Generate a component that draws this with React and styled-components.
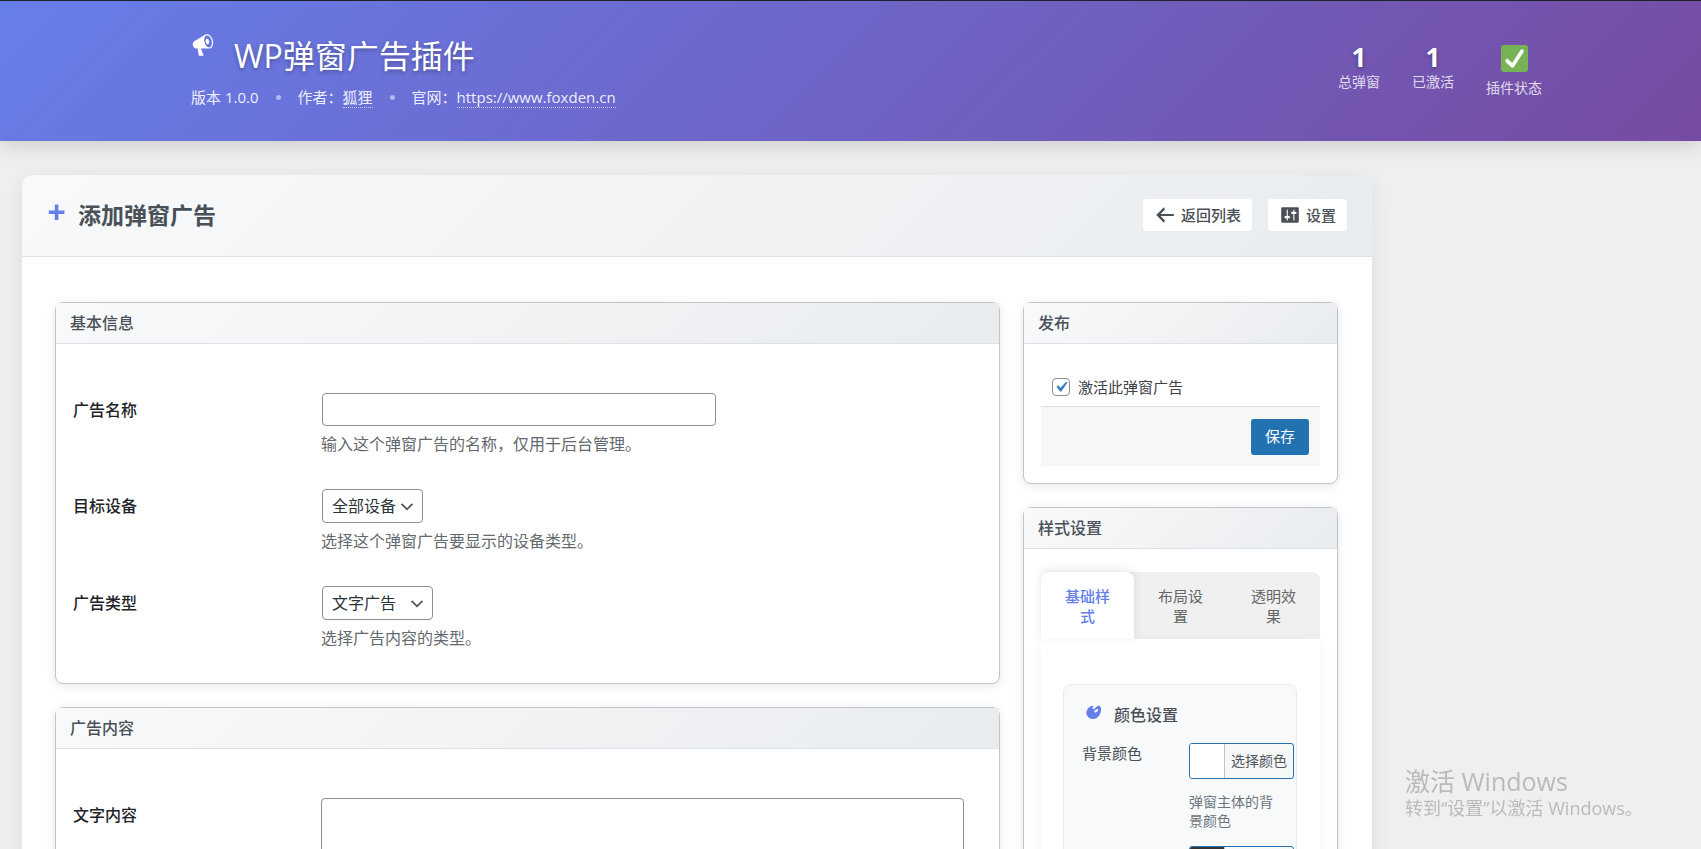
import React, { useState } from "react";
import styled, { createGlobalStyle } from "styled-components";

const icons = {
  megaphone:
    "M18.15 5.94c.46 1.62.38 3.22-.02 4.48-.42 1.28-1.26 2.18-2.3 2.48-.16.06-.26.06-.4.06-.06.02-.12.02-.18.02-.06.02-.14.02-.22.02h-6.8l2.22 5.5c.02.14-.06.26-.14.34-.08.1-.24.16-.34.16H6.95c-.1 0-.26-.06-.34-.16-.08-.08-.16-.2-.14-.34l-1-5.5H4.25l-.02-.02c-.5.06-1.08-.18-1.54-.62s-.88-1.08-1.06-1.88c-.24-.8-.2-1.56-.02-2.2.18-.62.58-1.08 1.06-1.3l.02-.02 9-5.4c.1-.06.18-.1.24-.16.06-.04.14-.08.24-.12.16-.08.28-.12.5-.18 1.04-.3 2.24.1 3.22.98s1.84 2.24 2.26 3.86zm-2.58 5.98h-.02c.4-.1.74-.34 1.04-.7.58-.7.86-1.76.86-3.04 0-.64-.1-1.3-.28-1.98-.34-1.36-1.02-2.5-1.78-3.24s-1.68-1.1-2.46-.88c-.82.22-1.4.96-1.7 2-.32 1.04-.28 2.36.06 3.72.38 1.36 1 2.5 1.8 3.24.78.74 1.62 1.1 2.48.88zm-2.54-7.08c.22-.04.42-.02.62.04.38.16.76.48 1.02 1s.42 1.2.42 1.78c0 .3-.04.56-.12.8-.18.48-.44.84-.86.94-.34.1-.8-.06-1.14-.4s-.64-.86-.78-1.5c-.18-.62-.12-1.24.02-1.72s.48-.84.82-.94z",
  plus: "M17 7v3h-5v5H9v-5H4V7h5V2h3v5h5z",
  back: "M18 9v2H6l4 4-1 2-7-7 7-7 1 2-4 4h12z",
  settings:
    "M18 16V4c0-.55-.45-1-1-1H3c-.55 0-1 .45-1 1v12c0 .55.45 1 1 1h14c.55 0 1-.45 1-1zM8 11h1c.55 0 1 .45 1 1s-.45 1-1 1H8v1.5c0 .28-.22.5-.5.5s-.5-.22-.5-.5V13H6c-.55 0-1-.45-1-1s.45-1 1-1h1V5.5c0-.28.22-.5.5-.5s.5.22.5.5V11zm5-2h-1c-.55 0-1-.45-1-1s.45-1 1-1h1V5.5c0-.28.22-.5.5-.5s.5.22.5.5V7h1c.55 0 1 .45 1 1s-.45 1-1 1h-1v5.5c0 .28-.22.5-.5.5s-.5-.22-.5-.5V9z",
  art: "M8.55 3.06c1.01.34-1.95 2.01-.1 3.13 1.04.63 3.31-2.22 4.45-2.86.97-.54 2.67-.65 3.53 1.23 1.09 2.38.14 8.57-3.79 11.06-3.97 2.5-8.97 1.23-10.7-2.66-2.01-4.53 3.12-11.09 6.61-9.9zm1.21 6.45c.73 1.64 4.7-.5 3.79-2.8-.59-1.49-4.48 1.25-3.79 2.8z",
};

const tabs = ["基础样式", "布局设置", "透明效果"];

const colors = [
  { id: "bg", label: "背景颜色", value: "#ffffff", help: "弹窗主体的背景颜色" },
  { id: "text", label: "文字颜色", value: "#333333", help: "弹窗文字的颜色" },
];

const Icon = ({ name, size }) => (
  <IconSvg viewBox="0 0 20 20" width={size} height={size} aria-hidden="true">
    <path d={icons[name]} />
  </IconSvg>
);

const CheckMark = () => (
  <StatusSvg viewBox="0 0 36 36" width="27" height="27" role="img">
    <rect width="36" height="36" rx="4" fill="#77b255" />
    <path
      d="M29.28 6.36a2.5 2.5 0 0 0-3.46.74L14.94 23.88 9.93 19.24a2.5 2.5 0 1 0-3.4 3.67l7.21 6.66c.48.45 1.1.67 1.7.67.67 0 1.54-.28 2.1-1.14.33-.51 12.48-19.28 12.48-19.28a2.5 2.5 0 0 0-.74-3.46z"
      fill="#fff"
    />
  </StatusSvg>
);

const Stat = ({ value, label }) => (
  <StatItem>
    {value}
    <StatLabel>{label}</StatLabel>
  </StatItem>
);

const App = () => {
  const [activeTab, setActiveTab] = useState(0);
  const [active, setActive] = useState(true);

  return (
    <>
      <GlobalStyle />
      <Header>
        <HeaderInner>
          <div>
            <Brand>
              <Icon name="megaphone" size={24} />
              <h1>WP弹窗广告插件</h1>
            </Brand>
            <Meta>
              <span>版本 1.0.0</span>
              <Dot />
              <span>
                作者：<a href="#author">狐狸</a>
              </span>
              <Dot />
              <span>
                官网：<a href="#site">https://www.foxden.cn</a>
              </span>
            </Meta>
          </div>
          <Stats>
            <Stat value={<StatNumber>1</StatNumber>} label="总弹窗" />
            <Stat value={<StatNumber>1</StatNumber>} label="已激活" />
            <Stat value={<CheckMark />} label="插件状态" />
          </Stats>
        </HeaderInner>
      </Header>

      <Card>
        <CardHeader>
          <CardTitle>
            <Icon name="plus" size={24} />
            <h2>添加弹窗广告</h2>
          </CardTitle>
          <CardActions>
            <ActionLink href="#list">
              <Icon name="back" size={22} />
              返回列表
            </ActionLink>
            <ActionLink href="#settings">
              <Icon name="settings" size={22} />
              设置
            </ActionLink>
          </CardActions>
        </CardHeader>

        <Columns>
          <Column>
            <Box>
              <BoxTitle>基本信息</BoxTitle>
              <FormBody>
                <FormRow>
                  <label htmlFor="name">广告名称</label>
                  <div>
                    <TextInput id="name" type="text" />
                    <Description>
                      输入这个弹窗广告的名称，仅用于后台管理。
                    </Description>
                  </div>
                </FormRow>
                <FormRow>
                  <label htmlFor="device">目标设备</label>
                  <div>
                    <Select id="device" $width={101}>
                      <option>全部设备</option>
                    </Select>
                    <Description>选择这个弹窗广告要显示的设备类型。</Description>
                  </div>
                </FormRow>
                <FormRow>
                  <label htmlFor="type">广告类型</label>
                  <div>
                    <Select id="type" $width={111}>
                      <option>文字广告</option>
                    </Select>
                    <Description>选择广告内容的类型。</Description>
                  </div>
                </FormRow>
              </FormBody>
            </Box>

            <Box>
              <BoxTitle>广告内容</BoxTitle>
              <FormBody>
                <FormRow>
                  <label htmlFor="content">文字内容</label>
                  <TextArea id="content" rows="6" />
                </FormRow>
              </FormBody>
            </Box>
          </Column>

          <Column>
            <Box>
              <BoxTitle>发布</BoxTitle>
              <PublishBody>
                <CheckLabel>
                  <input
                    type="checkbox"
                    checked={active}
                    onChange={(e) => setActive(e.target.checked)}
                  />
                  激活此弹窗广告
                </CheckLabel>
                <PublishActions>
                  <SaveButton type="button">保存</SaveButton>
                </PublishActions>
              </PublishBody>
            </Box>

            <Box>
              <BoxTitle>样式设置</BoxTitle>
              <StyleBody>
                <TabBar role="tablist">
                  {tabs.map((tab, index) => (
                    <Tab
                      key={tab}
                      type="button"
                      role="tab"
                      aria-selected={index === activeTab}
                      $active={index === activeTab}
                      onClick={() => setActiveTab(index)}
                    >
                      {tab}
                    </Tab>
                  ))}
                </TabBar>
                <TabPanel>
                  <Section>
                    <SectionTitle>
                      <Icon name="art" size={19} />
                      <h4>颜色设置</h4>
                    </SectionTitle>
                    {colors.map((color) => (
                      <ColorRow key={color.id}>
                        <span>{color.label}</span>
                        <div>
                          <ColorButton type="button">
                            <Swatch $color={color.value} />
                            <span>选择颜色</span>
                          </ColorButton>
                          <ColorHelp>{color.help}</ColorHelp>
                        </div>
                      </ColorRow>
                    ))}
                  </Section>
                </TabPanel>
              </StyleBody>
            </Box>
          </Column>
        </Columns>
      </Card>

      <Watermark>
        <strong>激活 Windows</strong>
        <span>转到“设置”以激活 Windows。</span>
      </Watermark>
    </>
  );
};

const GlobalStyle = createGlobalStyle`
  * {
    box-sizing: border-box;
  }

  body {
    margin: 0;
    background: #efefef;
    color: #3c434a;
    font-family: "Open Sans", "Noto Sans CJK SC", sans-serif;
    font-size: 15px;
    line-height: 20px;
  }

  h1, h2, h3, h4, p {
    margin: 0;
  }

  button, input, select, textarea {
    font-family: inherit;
  }
`;

const IconSvg = styled.svg`
  flex: none;
  fill: currentColor;
`;

const Header = styled.header`
  padding: 32px 0;
  border-top: 1px solid #1d2327;
  background: linear-gradient(135deg, #667eea 0%, #764ba2 100%);
  box-shadow: 0 4px 20px rgba(0, 0, 0, 0.15);
  color: #fff;
`;

const HeaderInner = styled.div`
  display: flex;
  align-items: center;
  justify-content: space-between;
  max-width: 1383px;
  margin: 0 auto;
  padding-left: 32px;
`;

const Brand = styled.div`
  display: flex;
  align-items: flex-start;
  gap: 19px;

  h1 {
    font-size: 32px;
    font-weight: 400;
    line-height: 46px;
    text-shadow: 0 2px 4px rgba(0, 0, 0, 0.3);
  }
`;

const Meta = styled.div`
  display: flex;
  align-items: center;
  gap: 17px;
  margin-top: 6px;
  font-size: 15px;
  line-height: 24px;
  color: rgba(255, 255, 255, 0.9);

  a {
    color: inherit;
    text-decoration: none;
    border-bottom: 1px dotted rgba(255, 255, 255, 0.6);
  }
`;

const Dot = styled.span`
  width: 5px;
  height: 5px;
  border-radius: 50%;
  background: rgba(255, 255, 255, 0.5);
`;

const Stats = styled.div`
  display: flex;
  align-items: flex-start;
  gap: 32px;
`;

const StatItem = styled.div`
  display: flex;
  flex-direction: column;
  align-items: center;
`;

const StatNumber = styled.span`
  margin-bottom: 3px;
  font-size: 26px;
  font-weight: 700;
  line-height: 24px;
  text-shadow: 0 2px 4px rgba(0, 0, 0, 0.3);
`;

const StatLabel = styled.span`
  font-size: 14px;
  color: rgba(255, 255, 255, 0.8);
`;

const StatusSvg = styled.svg`
  margin-bottom: 6px;
`;

const Card = styled.main`
  max-width: 1350px;
  margin: 34px 22px 40px;
  border-radius: 12px;
  background: #fff;
  box-shadow: 0 4px 20px rgba(0, 0, 0, 0.08);
`;

const CardHeader = styled.div`
  display: flex;
  align-items: flex-start;
  justify-content: space-between;
  padding: 24px 25px 25px 22px;
  border-bottom: 1px solid #dee2e6;
  border-radius: 12px 12px 0 0;
  background: linear-gradient(135deg, #f8f9fa 0%, #e9ecef 100%);
`;

const CardTitle = styled.div`
  display: flex;
  align-items: center;
  gap: 10px;
  color: #667eea;

  h2 {
    color: #495057;
    font-size: 23px;
    font-weight: 700;
    line-height: 32px;
  }

  svg {
    margin-bottom: 2px;
  }
`;

const CardActions = styled.div`
  display: flex;
  gap: 16px;
`;

const ActionLink = styled.a`
  display: flex;
  align-items: center;
  gap: 5px;
  height: 32px;
  padding: 0 11px;
  border-radius: 4px;
  background: #fff;
  color: #495057;
  font-weight: 500;
  text-decoration: none;
`;

const Columns = styled.div`
  display: grid;
  grid-template-columns: minmax(0, 1fr) 315px;
  gap: 23px;
  padding: 45px 34px 40px 33px;
`;

const Column = styled.div`
  display: flex;
  flex-direction: column;
  gap: 23px;
`;

const Box = styled.section`
  border: 1px solid #c3c4c7;
  border-radius: 8px;
  background: #fff;
  box-shadow: 0 2px 10px rgba(0, 0, 0, 0.1);
`;

const BoxTitle = styled.h3`
  padding: 8px 14px;
  border-bottom: 1px solid #dee2e6;
  background: linear-gradient(135deg, #f8f9fa 0%, #e9ecef 100%);
  color: #495057;
  font-size: 16px;
  font-weight: 500;
  line-height: 24px;
`;

const FormBody = styled.div`
  display: flex;
  flex-direction: column;
  gap: 33px;
  padding: 49px 35px 33px 17px;
`;

const FormRow = styled.div`
  display: grid;
  grid-template-columns: 248px minmax(0, 1fr);

  label {
    color: #1d2327;
    font-size: 16px;
    font-weight: 500;
    line-height: 34px;
  }
`;

const TextInput = styled.input`
  display: block;
  width: 394px;
  max-width: 100%;
  height: 33px;
  margin: 0 1px;
  padding: 0 8px;
  border: 1px solid #8c8f94;
  border-radius: 4px;
  font-size: 16px;
`;

const Select = styled.select`
  display: block;
  appearance: none;
  width: ${({ $width }) => $width}px;
  height: 34px;
  margin: 0 1px;
  padding: 0 24px 0 9px;
  border: 1px solid #8c8f94;
  border-radius: 4px;
  background: #fff
    url("data:image/svg+xml,%3Csvg xmlns='http://www.w3.org/2000/svg' viewBox='0 0 20 20'%3E%3Cpath d='M5 6l5 5 5-5 2 1-7 7-7-7 2-1z' fill='%23555'/%3E%3C/svg%3E")
    no-repeat right 6px top 55%;
  background-size: 18px;
  color: #2c3338;
  font-size: 16px;
`;

const Description = styled.p`
  margin-top: 6px;
  color: #646970;
  font-size: 16px;
  line-height: 24px;
`;

const TextArea = styled.textarea`
  display: block;
  width: 100%;
  padding: 8px;
  border: 1px solid #8c8f94;
  border-radius: 4px;
  font-size: 16px;
  resize: vertical;
`;

const PublishBody = styled.div`
  padding: 33px 17px 17px;
`;

const CheckLabel = styled.label`
  display: flex;
  align-items: center;
  gap: 8px;
  padding: 0 11px 9px;

  input {
    appearance: none;
    width: 18px;
    height: 18px;
    margin: 0;
    border: 1px solid #8c8f94;
    border-radius: 4px;
    background: #fff;
  }

  input:checked {
    background: #fff
      url("data:image/svg+xml,%3Csvg xmlns='http://www.w3.org/2000/svg' viewBox='0 0 20 20'%3E%3Cpath d='M14.83 4.89l1.34.94-5.81 8.38H9.02L5.78 9.67l1.34-1.25 2.57 2.4z' fill='%233582c4'/%3E%3C/svg%3E")
      center / 21px no-repeat;
  }
`;

const PublishActions = styled.div`
  display: flex;
  justify-content: flex-end;
  padding: 12px 11px 11px;
  border-top: 1px solid #dcdcde;
  background: #f6f7f7;
`;

const SaveButton = styled.button`
  height: 36px;
  padding: 0 14px 3px;
  border: 0;
  border-radius: 3px;
  background: #2271b1;
  color: #fff;
  font-size: 15px;
`;

const StyleBody = styled.div`
  padding: 23px 17px 17px;
`;

const TabBar = styled.div`
  display: flex;
  border-radius: 8px 8px 0 0;
  background: #f0f0f0;
`;

const Tab = styled.button`
  flex: 1;
  padding: 14px 20px 13px;
  border: 0;
  border-radius: ${({ $active }) => ($active ? "8px 8px 0 0" : "0")};
  background: ${({ $active }) => ($active ? "#fff" : "transparent")};
  box-shadow: ${({ $active }) =>
    $active ? "0 -2px 10px rgba(0, 0, 0, 0.1)" : "none"};
  color: ${({ $active }) => ($active ? "#667eea" : "#666")};
  font-size: 15px;
  font-weight: ${({ $active }) => ($active ? 500 : 400)};
  line-height: 20px;
`;

const TabPanel = styled.div`
  padding: 45px 23px 23px 22px;
  background: #fff;
  box-shadow: 0 4px 15px rgba(0, 0, 0, 0.05);
`;

const Section = styled.div`
  padding: 18px 19px 18px 18px;
  border: 1px solid #e9ecef;
  border-radius: 8px;
  background: #f8f9fa;
`;

const SectionTitle = styled.div`
  display: flex;
  gap: 10px;
  padding-left: 3px;
  margin-bottom: 16px;
  color: #667eea;

  h4 {
    color: #495057;
    font-size: 16px;
    font-weight: 500;
    line-height: 24px;
  }
`;

const ColorRow = styled.div`
  display: grid;
  grid-template-columns: 107px minmax(0, 1fr);
  margin-bottom: 16px;
  color: #495057;
`;

const ColorButton = styled.button`
  display: flex;
  width: 105px;
  height: 36px;
  padding: 0;
  border: 1px solid #2271b1;
  border-radius: 3px;
  overflow: hidden;
  background: #f6f7f7;
  color: #50575e;
  font-size: 14px;
  line-height: 34px;

  span:last-child {
    flex: 1;
    border-left: 1px solid #c3c4c7;
  }
`;

const Swatch = styled.span`
  width: 34px;
  height: 34px;
  background: ${({ $color }) => $color};
`;

const ColorHelp = styled.p`
  margin-top: 13px;
  color: #6c757d;
  font-size: 14px;
  line-height: 19px;
`;

const Watermark = styled.aside`
  position: fixed;
  right: 52px;
  bottom: 29px;
  display: flex;
  flex-direction: column;
  width: 244px;
  color: #bababa;
  pointer-events: none;

  strong {
    font-size: 25px;
    font-weight: 400;
    line-height: 30px;
  }

  span {
    font-size: 18px;
    line-height: 24px;
    white-space: nowrap;
  }
`;

export default App;
